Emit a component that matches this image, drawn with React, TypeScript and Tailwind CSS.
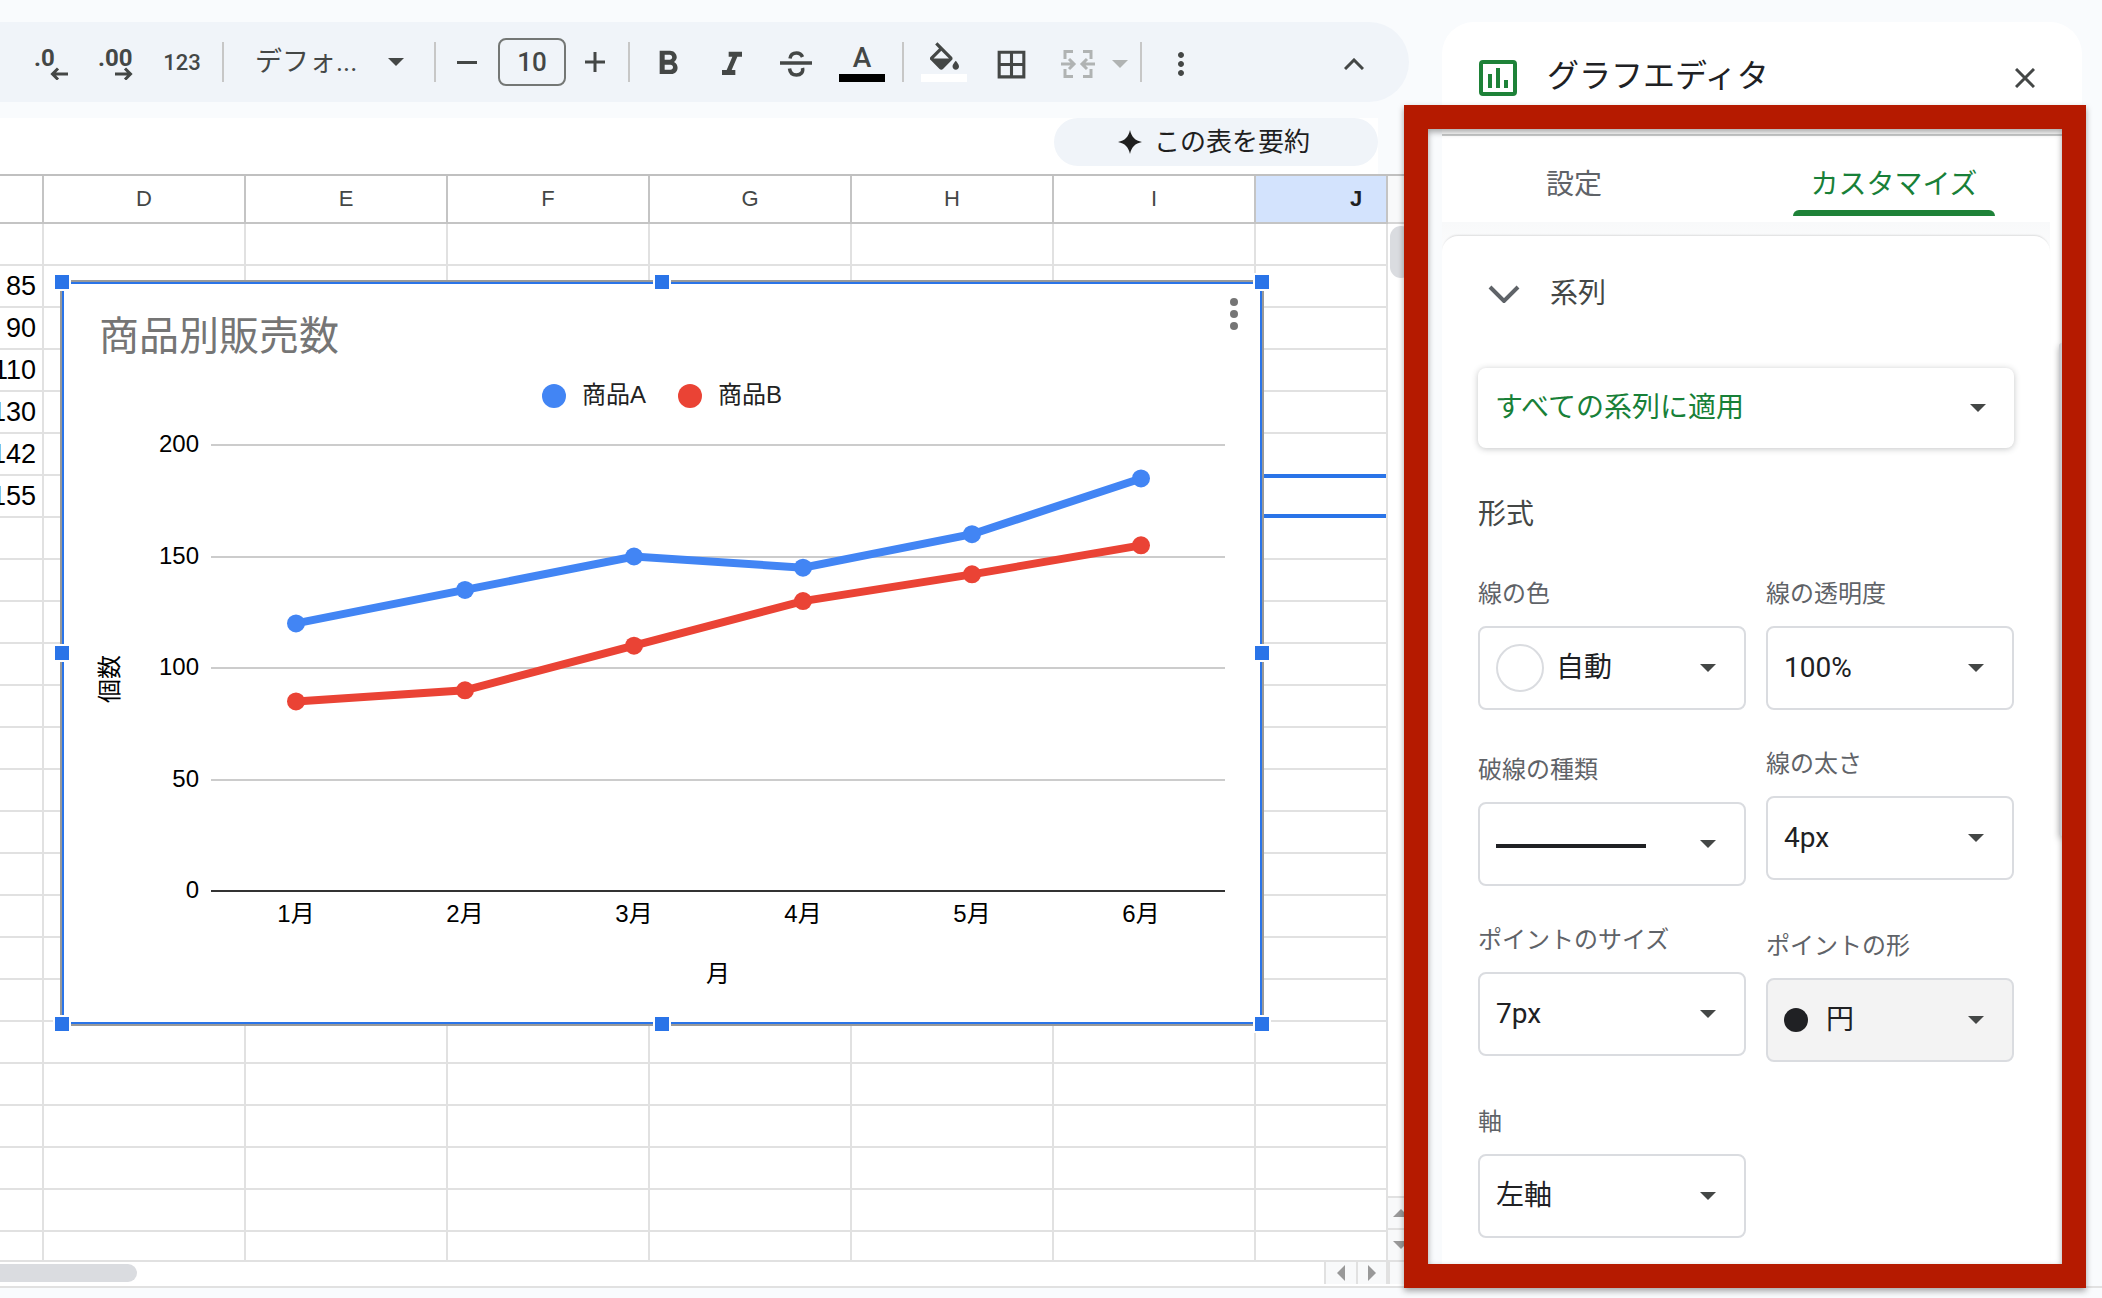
import React, { useState } from 'react';
import clsx from 'clsx';
import { MdFormatBold, MdFormatItalic, MdBorderAll, MdMoreVert } from 'react-icons/md';

const columns = ['D', 'E', 'F', 'G', 'H', 'I'];
const cellValues = ['', '85', '90', '110', '130', '142', '155'];
const rowCount = 25;
const selectedRow = 6;

const months = ['1月', '2月', '3月', '4月', '5月', '6月'];
const ticks = [200, 150, 100, 50, 0];
const series = [
  { name: '商品A', color: '#4285f4', legendX: 494, values: [120, 135, 150, 145, 160, 185] },
  { name: '商品B', color: '#ea4335', legendX: 630, values: [85, 90, 110, 130, 142, 155] },
];

const handles = [
  'left-0 top-0',
  'left-1/2 top-0',
  'left-full top-0',
  'left-0 top-1/2',
  'left-full top-1/2',
  'left-0 top-full',
  'left-1/2 top-full',
  'left-full top-full',
];

const pointX = (index: number) => 236 + index * 169;
const pointY = (value: number) => 611 - (value * 223) / 100;

function Caret({ className }: { className?: string }) {
  return (
    <svg viewBox="0 0 16 8" className={clsx('w-4 h-2 fill-current', className)} aria-hidden="true">
      <path d="M0 0h16L8 8z" />
    </svg>
  );
}

function Divider({ className }: { className?: string }) {
  return <div className={clsx('w-0.5 h-10 shrink-0 bg-[#c7c7c7]', className)} />;
}

interface ToolButtonProps {
  label: string;
  className?: string;
  children: React.ReactNode;
}

function ToolButton({ label, className, children }: ToolButtonProps) {
  return (
    <button aria-label={label} className={clsx('h-16 shrink-0 flex items-center justify-center', className ?? 'w-16')}>
      {children}
    </button>
  );
}

function Toolbar() {
  const [fontSize, setFontSize] = useState('10');

  return (
    <div className="flex items-center h-20 mr-[5px] pl-5 rounded-r-full bg-[#f0f4f9] text-[#444746]">
      <ToolButton label="小数点以下の桁数を減らす">
        <svg viewBox="0 0 36 36" className="size-9 fill-current font-['Roboto',sans-serif] font-bold text-[24px]">
          <text x="0" y="22">.0</text>
          <path d="M18 30h16M24 24.500l-5.500 5.500 5.500 5.500" fill="none" stroke="currentColor" strokeWidth="3" />
        </svg>
      </ToolButton>
      <ToolButton label="小数点以下の桁数を増やす">
        <svg viewBox="0 0 36 36" className="size-9 fill-current font-['Roboto',sans-serif] font-bold text-[24px]">
          <text x="0" y="22">.00</text>
          <path d="M17 30h16M27 24.500l5.500 5.500-5.500 5.500" fill="none" stroke="currentColor" strokeWidth="3" />
        </svg>
      </ToolButton>
      <ToolButton label="表示形式の詳細設定" className="w-[68px] mr-0.5 text-[22px] font-medium">
        123
      </ToolButton>
      <Divider className="ml-1" />
      <div className="relative flex items-center ml-[31px]">
        <select aria-label="フォント" className="appearance-none w-[149px] h-12 bg-transparent text-[27px]">
          <option>デフォ...</option>
        </select>
        <Caret className="absolute right-0 pointer-events-none" />
      </div>
      <Divider className="ml-[30px]" />
      <ToolButton label="フォントサイズを縮小" className="w-[62px]">
        <span className="w-5 h-[3px] bg-current" />
      </ToolButton>
      <input
        aria-label="フォントサイズ"
        value={fontSize}
        onChange={(e) => setFontSize(e.target.value)}
        className="w-[68px] h-12 shrink-0 rounded-lg border-2 border-[#747775] text-center text-[26px] font-medium"
      />
      <ToolButton label="フォントサイズを拡大" className="w-[58px]">
        <svg viewBox="0 0 20 20" className="size-5" stroke="currentColor" strokeWidth="3">
          <path d="M0 10h20M10 0v20" />
        </svg>
      </ToolButton>
      <Divider className="ml-1" />
      <ToolButton label="太字" className="w-16 ml-1.5 pt-1">
        <MdFormatBold className="size-10" />
      </ToolButton>
      <ToolButton label="斜体" className="w-16 pt-1.5">
        <MdFormatItalic className="size-10" />
      </ToolButton>
      <ToolButton label="取り消し線" className="w-16 pt-1">
        <svg viewBox="0 0 32 26" className="w-8 h-[26px]" fill="none" stroke="currentColor" strokeWidth="3.500">
          <path d="M0 12h32" />
          <path d="M10 7.500c.5-3.500 3-5.500 6.500-5.500 3 0 5 1.500 6 4" />
          <path d="M9.500 17.500c.5 4.500 3 6.500 7 6.500 4.500 0 7-3 6-7" />
        </svg>
      </ToolButton>
      <ToolButton label="テキストの色" className="w-16 ml-0.5">
        <span className="flex flex-col items-center w-[46px] border-b-8 border-black text-[28px] leading-8 font-medium">
          A
        </span>
      </ToolButton>
      <Divider className="ml-2" />
      <ToolButton label="塗りつぶしの色" className="w-16 ml-2">
        <span className="flex flex-col items-center w-[46px] pb-1 border-b-8 border-white">
          <svg viewBox="3 0 18 17" className="w-[29px] h-7 fill-current">
            <path d="M16.560 8.940L7.620 0 6.210 1.410l2.380 2.380-5.150 5.150a1.490 1.490 0 0 0 0 2.120l5.500 5.500c.29.29.68.44 1.060.44s.77-.15 1.060-.44l5.500-5.500c.59-.58.59-1.530 0-2.120zM5.210 10L10 5.210 14.790 10H5.210zM19 11.500s-2 2.170-2 3.500c0 1.100.9 2 2 2s2-.9 2-2c0-1.330-2-3.500-2-3.500z" />
          </svg>
        </span>
      </ToolButton>
      <ToolButton label="枠線" className="w-16 ml-[3px] pt-1">
        <MdBorderAll className="size-[37px]" />
      </ToolButton>
      <ToolButton label="セルを結合" className="w-[71px] ml-4 pt-1 gap-[17px] text-[#b0b3b3]">
        <svg viewBox="0 0 34 30" className="w-[34px] h-[30px]" fill="none" stroke="currentColor" strokeWidth="3">
          <path d="M12 2.500H4V10M22 2.500h8V10M12 27.500H4V20M22 27.500h8V20" />
          <path d="M0 15h12M8 10l5 5-5 5M34 15H22M26 10l-5 5 5 5" />
        </svg>
        <Caret />
      </ToolButton>
      <Divider className="ml-2.5" />
      <ToolButton label="その他" className="w-16 ml-[7px] pt-1">
        <MdMoreVert className="size-9" />
      </ToolButton>
      <ToolButton label="メニューを非表示" className="w-16 ml-auto mr-[23px] pt-1">
        <svg viewBox="0 0 20 12" className="w-5 h-3" fill="none" stroke="currentColor" strokeWidth="3">
          <path d="M1 11l9-9 9 9" />
        </svg>
      </ToolButton>
    </div>
  );
}

function Chart() {
  return (
    <div className="absolute left-[60px] top-[104px] w-[1204px] h-[746px] bg-white border-2 border-[#999] font-['Liberation_Sans','Noto_Sans_CJK_JP',sans-serif]">
      <div className="relative size-full border-2 border-[#2a74e8]">
        <svg viewBox="4 4 1196 738" className="size-full text-[24px]" role="img" aria-label="商品別販売数">
          <text x="39" y="70" fill="#757575" className="text-[40px]">
            商品別販売数
          </text>

          {/* Legend */}
          {series.map((s) => (
            <g key={s.name}>
              <circle cx={s.legendX} cy="116" r="12" fill={s.color} />
              <text x={s.legendX + 28} y="123" fill="#222">
                {s.name}
              </text>
            </g>
          ))}

          {/* Axes */}
          {ticks.map((tick) => (
            <g key={tick}>
              <rect x="151" y={Math.round(pointY(tick)) - 1} width="1014" height="2" fill={tick === 0 ? '#333' : '#ccc'} />
              <text x="139" y={Math.round(pointY(tick)) + 7} textAnchor="end">
                {tick}
              </text>
            </g>
          ))}
          {months.map((month, i) => (
            <text key={month} x={pointX(i)} y="642" textAnchor="middle">
              {month}
            </text>
          ))}
          <text x="658" y="702" textAnchor="middle">
            月
          </text>
          <text transform="translate(58 399) rotate(-90)" textAnchor="middle">
            個数
          </text>

          {/* Series */}
          {series.map((s) => (
            <g key={s.name} fill={s.color}>
              <polyline
                points={s.values.map((v, i) => `${pointX(i)},${pointY(v)}`).join(' ')}
                fill="none"
                stroke={s.color}
                strokeWidth="8"
              />
              {s.values.map((v, i) => (
                <circle key={i} cx={pointX(i)} cy={pointY(v)} r="9" />
              ))}
            </g>
          ))}
        </svg>

        <button aria-label="グラフのメニュー" className="absolute right-2.5 top-1.5 w-8 h-12 flex items-center justify-center text-[#757575]">
          <svg viewBox="0 0 8 32" className="w-2 h-8 fill-current">
            <circle cx="4" cy="4" r="4" />
            <circle cx="4" cy="16" r="4" />
            <circle cx="4" cy="28" r="4" />
          </svg>
        </button>
      </div>

      {handles.map((position) => (
        <span
          key={position}
          className={clsx('absolute size-[18px] -translate-1/2 bg-[#2a74e8] border-2 border-white', position)}
        />
      ))}
    </div>
  );
}

function Sheet() {
  return (
    <div className="relative flex-1 min-h-0 flex border-t-2 border-[#c0c0c0] bg-white">
      <div className="flex-1 min-w-0 overflow-hidden font-['Liberation_Sans',sans-serif]">
        <table className="w-full table-fixed border-separate border-spacing-0">
          <thead>
            <tr className="h-12 text-[22px] leading-6 text-[#444746]">
              <th className="w-11 border-r-2 border-b-2 border-[#c4c4c4]" />
              {columns.map((column) => (
                <th key={column} className="w-[202px] p-0 border-r-2 border-b-2 border-[#c4c4c4] font-normal">
                  {column}
                </th>
              ))}
              <th className="p-0 border-r-2 border-b-2 border-[#c4c4c4] bg-[#d3e3fd] font-bold text-[#1f1f1f]">
                <div className="overflow-hidden">
                  <div className="w-[200px]">J</div>
                </div>
              </th>
            </tr>
          </thead>
          <tbody>
            {Array.from({ length: rowCount }, (_, row) => (
              <tr key={row} className="h-[42px]">
                <td className="p-0 border-r-2 border-b-2 border-[#e1e1e1]">
                  <div className="flex justify-end overflow-hidden pr-1.5 text-[27px] leading-10 text-black">
                    {cellValues[row]}
                  </div>
                </td>
                {columns.map((column) => (
                  <td key={column} className="p-0 border-r-2 border-b-2 border-[#e1e1e1]" />
                ))}
                <td className="relative p-0 border-r-2 border-b-2 border-[#e1e1e1]">
                  {row === selectedRow && (
                    <div className="absolute inset-x-0 -top-0.5 -bottom-0.5 border-y-4 border-[#2a74e8]" />
                  )}
                </td>
              </tr>
            ))}
          </tbody>
        </table>
      </div>

      {/* Vertical scrollbar */}
      <div className="w-[26px] shrink-0 flex flex-col">
        <div className="h-12 bg-[#f8f9fa] border-b-2 border-[#d5d5d5]" />
        <div className="flex-1 pt-0.5 pl-0.5">
          <div className="w-[22px] h-[52px] rounded-full bg-[#dadce0]" />
        </div>
        <button aria-label="上にスクロール" className="h-8 pl-[5px] flex items-center border-t-2 border-[#e1e1e1] bg-[#f8f9fa] text-[#999]">
          <Caret className="w-3 rotate-180" />
        </button>
        <button aria-label="下にスクロール" className="h-8 pl-[5px] flex items-center border-t-2 border-[#e1e1e1] bg-[#f8f9fa] text-[#999]">
          <Caret className="w-3" />
        </button>
      </div>

      <Chart />
    </div>
  );
}

function HorizontalScrollbar() {
  return (
    <div className="flex h-[26px] border-t-2 border-[#e1e1e1] bg-white">
      <div className="flex-1 pt-0.5">
        <div className="w-[137px] h-[18px] rounded-r-full bg-[#dadce0]" />
      </div>
      <button aria-label="左にスクロール" className="w-8 h-[22px] flex items-center justify-center border-l-2 border-[#e1e1e1] bg-[#f8f9fa] text-[#999]">
        <Caret className="w-3 rotate-90" />
      </button>
      <button aria-label="右にスクロール" className="w-[30px] h-[22px] flex items-center justify-center border-l-2 border-[#e1e1e1] bg-[#f8f9fa] text-[#999]">
        <Caret className="w-3 -rotate-90" />
      </button>
      <div className="w-7 h-[22px] border-l-4 border-[#e1e1e1] bg-[#f8f9fa]" />
    </div>
  );
}

interface FieldProps {
  id: string;
  label: string;
  value?: string;
  className?: string;
  selectClassName?: string;
  children?: React.ReactNode;
}

function Field({ id, label, value, className, selectClassName, children }: FieldProps) {
  return (
    <div className={className}>
      <label htmlFor={id} className="block mb-4 text-[24px] leading-8 text-[#5f6368]">
        {label}
      </label>
      <div className="relative flex items-center">
        {value ? (
          <select
            id={id}
            className={clsx(
              'appearance-none w-full h-[84px] rounded-lg border-2 border-[#dadce0] text-[28px] text-[#202124]',
              selectClassName ?? 'pl-4 bg-white',
            )}
          >
            <option>{value}</option>
          </select>
        ) : (
          <button id={id} aria-haspopup="listbox" className="w-full h-[84px] pl-4 rounded-lg border-2 border-[#dadce0] bg-white">
            <span className="block w-[150px] h-1 mt-1 bg-[#202124]" />
          </button>
        )}
        {children}
        <Caret className="absolute right-[30px] text-[#444746] pointer-events-none" />
      </div>
    </div>
  );
}

function ChartEditor() {
  const [activeTab, setActiveTab] = useState('customize');
  const tabs = [
    { id: 'setup', label: '設定', width: 'w-[264px]' },
    { id: 'customize', label: 'カスタマイズ', width: 'flex-1' },
  ];

  return (
    <aside className="w-[640px] shrink-0 mr-5 rounded-t-[32px] bg-white overflow-hidden">
      <header className="flex items-center h-[114px] pl-[37px] pr-[47px] pb-1 border-b-2 border-[#c9cbcb]">
        <svg viewBox="0 0 38 36" className="w-[38px] h-9 mt-1 text-[#1e8238]" fill="none" stroke="currentColor" strokeWidth="4">
          <rect x="2" y="2" width="34" height="32" rx="2" />
          <path d="M11 14v14M19 8v20M27 20v8" />
        </svg>
        <h2 className="ml-[30px] text-[32px] text-[#202124]">グラフエディタ</h2>
        <button aria-label="閉じる" className="ml-auto mt-1 text-[#444746]">
          <svg viewBox="0 0 20 20" className="size-5" fill="none" stroke="currentColor" strokeWidth="3">
            <path d="M1 1l18 18M19 1L1 19" />
          </svg>
        </button>
      </header>

      <div role="tablist" className="flex h-[86px]">
        {tabs.map((tab) => (
          <button
            key={tab.id}
            role="tab"
            aria-selected={activeTab === tab.id}
            onClick={() => setActiveTab(tab.id)}
            className={clsx(
              'flex flex-col items-center text-[28px]',
              tab.width,
              activeTab === tab.id ? 'text-[#188038]' : 'text-[#5f6368]',
            )}
          >
            <span className="pt-6 leading-[50px]">{tab.label}</span>
            {activeTab === tab.id && <span className="w-[202px] h-1.5 rounded-t-md bg-[#1e8238]" />}
          </button>
        ))}
      </div>

      <div className="mr-8 pt-3.5 bg-linear-to-b from-[#f8f9fa] from-0% to-white to-5%">
        <section className="px-9 pt-8 pb-16 rounded-t-2xl bg-white shadow-[0_-2px_2px_-1px_rgba(0,0,0,0.12)]">
          <button className="flex items-center h-[52px] pl-2.5 text-[28px] text-[#444746]">
            <svg viewBox="0 0 32 18" className="w-8 h-[18px] text-[#5f6368]" fill="none" stroke="currentColor" strokeWidth="4">
              <path d="M2 2l14 14L30 2" />
            </svg>
            <span className="ml-[30px]">系列</span>
          </button>

          <div className="relative flex items-center w-[536px] mt-12">
            <select
              aria-label="系列を選択"
              className="appearance-none w-full h-20 pl-[17px] rounded-lg bg-white text-[28px] text-[#188038] shadow-[0_1px_6px_rgba(60,64,67,0.3)]"
            >
              <option>すべての系列に適用</option>
            </select>
            <Caret className="absolute right-7 text-[#444746] pointer-events-none" />
          </div>

          <h3 className="mt-12 mb-11 text-[28px] leading-[38px] text-[#444746]">形式</h3>

          <div className="flex items-start gap-5 w-[536px]">
            <div className="w-[268px]">
              <Field id="line-color" label="線の色" value="自動" selectClassName="pl-[76px] bg-white">
                <span className="absolute left-[18px] size-12 rounded-full border-2 border-[#dadce0] pointer-events-none" />
              </Field>
              <Field id="dash-type" label="破線の種類" className="mt-11" />
              <Field id="point-size" label="ポイントのサイズ" value="7px" className="mt-[38px]" />
              <Field id="axis" label="軸" value="左軸" className="mt-[50px]" />
            </div>
            <div className="flex-1">
              <Field id="line-opacity" label="線の透明度" value="100%" />
              <Field id="line-width" label="線の太さ" value="4px" className="mt-[38px]" />
              <Field id="point-shape" label="ポイントの形" value="円" className="mt-[50px]" selectClassName="pl-[58px] bg-[#f3f3f3]">
                <span className="absolute left-[18px] size-6 rounded-full bg-[#202124] pointer-events-none" />
              </Field>
            </div>
          </div>
        </section>
      </div>
    </aside>
  );
}

function App() {
  return (
    <div className="relative h-screen flex flex-col overflow-hidden bg-[#f9fbfd] font-['Roboto','Noto_Sans_CJK_JP',sans-serif]">
      <main className="flex-1 min-h-0 flex gap-7 pt-[22px]">
        <div className="flex-1 min-w-0 flex flex-col">
          <Toolbar />
          <div className="flex h-14 mt-4">
            <div className="flex-1 flex justify-end bg-white">
              <button className="w-[324px] h-12 flex items-center justify-center gap-3 pr-1 rounded-full bg-[#f0f4f9] text-[26px] text-[#1f1f1f]">
                <svg viewBox="0 0 24 24" className="size-6 fill-current">
                  <path d="M12 0c1.500 7 5 10.500 12 12-7 1.500-10.500 5-12 12-1.500-7-5-10.500-12-12 7-1.500 10.500-5 12-12z" />
                </svg>
                この表を要約
              </button>
            </div>
            <div className="w-9" />
          </div>
          <Sheet />
          <HorizontalScrollbar />
        </div>
        <ChartEditor />
      </main>
      <footer className="h-3 border-t-2 border-[#e1e1e1]" />

      {/* Highlight over the customise panel, with its scrollbar thumb at the inner edge */}
      <div className="absolute right-4 top-[105px] bottom-2.5 w-[682px] border-[24px] border-[#b51a00] drop-shadow-[0_3px_3px_rgba(0,0,0,0.35)] pointer-events-none">
        <div className="ml-auto mt-[214px] w-[3px] h-[493px] rounded-l-full bg-[#c9cbcf]" />
      </div>
    </div>
  );
}

export default App;
